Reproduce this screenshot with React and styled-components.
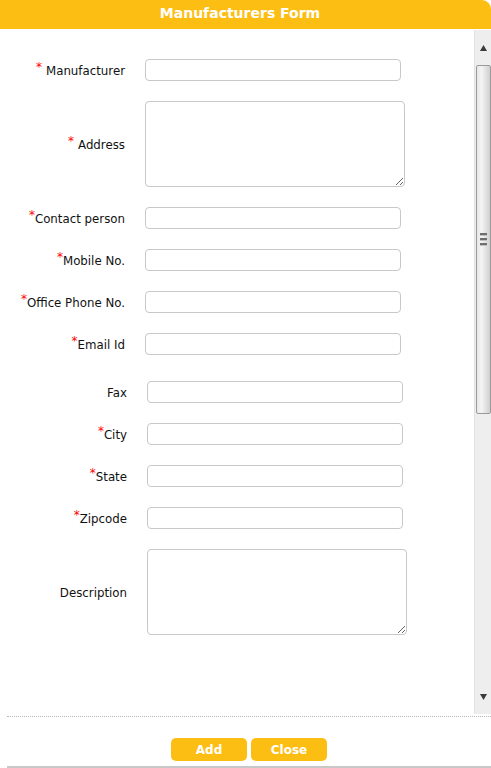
import React from "react";
import styled, { createGlobalStyle } from "styled-components";

const GlobalStyle = createGlobalStyle`
  html, body {
    margin: 0;
    padding: 0;
    background: #ffffff;
    font-family: "DejaVu Sans", Verdana, sans-serif;
  }
`;

const Page = styled.div`
  width: 491px;
  height: 768px;
  display: flex;
  flex-direction: column;
  overflow: hidden;
`;

const Header = styled.div`
  height: 29px;
  background: #fdbe13;
  border-top-right-radius: 9px;
  color: #ffffff;
  font-weight: bold;
  font-size: 14px;
  display: flex;
  align-items: center;
  justify-content: center;
  padding-bottom: 4px;
  padding-right: 11px;
  box-sizing: border-box;
`;

const Body = styled.div`
  height: 685px;
  display: flex;
`;

const FormArea = styled.div`
  flex: 1;
  padding-top: 30px;
  display: flex;
  flex-direction: column;
  gap: 26px;
`;

const Group = styled.div`
  display: grid;
  grid-template-columns: ${(p) => p.$labelEnd}px 256px;
  column-gap: 20px;
  row-gap: 20px;
  align-items: center;
`;

const Label = styled.div`
  text-align: right;
  font-size: 11.8px;
  color: #111111;
  white-space: nowrap;
  padding-top: 1px;
`;

const Star = styled.span`
  color: #ff0000;
  font-size: 12px;
  position: relative;
  top: -4px;
  margin-right: ${(p) => (p.$spaced ? "4px" : "0")};
`;

const Input = styled.input`
  width: 256px;
  height: 22px;
  box-sizing: border-box;
  border: 1px solid #c8c8c8;
  border-radius: 4px;
  margin: 0;
  padding: 2px 4px;
  font-family: inherit;
`;

const TextArea = styled.textarea`
  width: 260px;
  height: 86px;
  box-sizing: border-box;
  border: 1px solid #c8c8c8;
  border-radius: 4px;
  margin: 0;
  display: block;
  font-family: inherit;
`;

const ScrollBar = styled.div`
  width: 17px;
  margin-top: 1px;
  background: #eeeeee;
  border-left: 1px solid #e2e2e2;
  box-sizing: border-box;
  display: flex;
  flex-direction: column;
  align-items: center;
`;

const ArrowButton = styled.div`
  height: 35px;
  width: 100%;
  display: flex;
  align-items: center;
  justify-content: center;
`;

const Thumb = styled.div`
  width: 15px;
  height: 349px;
  box-sizing: border-box;
  border: 1px solid #9a9a9a;
  border-radius: 2px;
  background: linear-gradient(to right, #e8e8e8, #f4f4f4 35%, #cfcfcf);
  display: flex;
  flex-direction: column;
  align-items: center;
  justify-content: center;
  gap: 2px;
`;

const Grip = styled.div`
  width: 7px;
  height: 2px;
  background: #6e6e6e;
  border-bottom: 1px solid #c0c0c0;
`;

const Track = styled.div`
  flex: 1;
`;

const Footer = styled.div`
  margin-left: 7px;
  border-top: 1px dotted #b8b8b8;
  margin-top: 2px;
  height: 52px;
  display: flex;
  justify-content: center;
  align-items: flex-start;
  gap: 4px;
  padding-top: 21px;
  box-sizing: border-box;
  border-bottom: 2px solid #c8c8c8;
`;

const Button = styled.button`
  width: 76px;
  height: 23px;
  border: none;
  border-radius: 5px;
  background: #fdbe13;
  color: #ffffff;
  font-family: "DejaVu Sans", Verdana, sans-serif;
  font-weight: bold;
  font-size: 12px;
  padding: 0;
`;

const Arrow = ({ down }) => (
  <svg width="9" height="8" viewBox="0 0 9 8">
    <polygon
      points={down ? "1,1 8,1 4.5,7" : "4.5,1 8,7 1,7"}
      fill="#3a3a3a"
    />
  </svg>
);

const Req = ({ spaced }) => <Star $spaced={spaced}>*</Star>;

export default function App() {
  return (
    <Page>
      <GlobalStyle />
      <Header>Manufacturers Form</Header>
      <Body>
        <FormArea>
          <Group $labelEnd={125}>
            <Label>
              <Req spaced />Manufacturer
            </Label>
            <Input />
            <Label>
              <Req spaced />Address
            </Label>
            <TextArea />
            <Label>
              <Req />Contact person
            </Label>
            <Input />
            <Label>
              <Req />Mobile No.
            </Label>
            <Input />
            <Label>
              <Req />Office Phone No.
            </Label>
            <Input />
            <Label>
              <Req />Email Id
            </Label>
            <Input />
          </Group>
          <Group $labelEnd={127}>
            <Label>Fax</Label>
            <Input />
            <Label>
              <Req />City
            </Label>
            <Input />
            <Label>
              <Req />State
            </Label>
            <Input />
            <Label>
              <Req />Zipcode
            </Label>
            <Input />
            <Label>Description</Label>
            <TextArea />
          </Group>
        </FormArea>
        <ScrollBar>
          <ArrowButton>
            <Arrow />
          </ArrowButton>
          <Thumb>
            <Grip />
            <Grip />
            <Grip />
          </Thumb>
          <Track />
          <ArrowButton>
            <Arrow down />
          </ArrowButton>
        </ScrollBar>
      </Body>
      <Footer>
        <Button>Add</Button>
        <Button>Close</Button>
      </Footer>
    </Page>
  );
}
